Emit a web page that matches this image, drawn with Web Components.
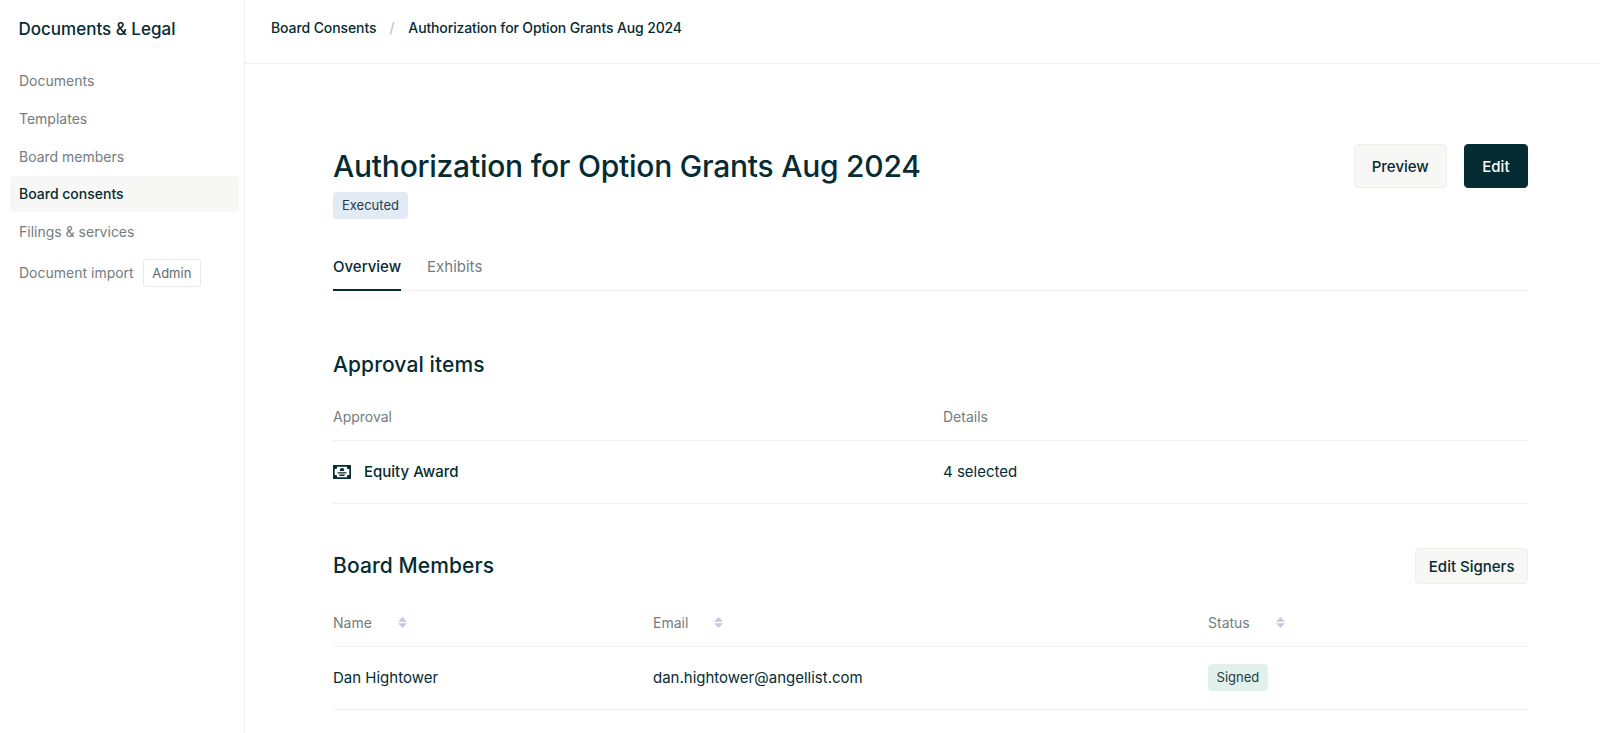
<!DOCTYPE html>
<html>
<head>
<meta charset="utf-8">
<title>Board Consents</title>
<style>
  html, body { margin: 0; height: 100%; background: #fff; overflow: hidden; }
  body { font-family: Inter, "Liberation Sans", sans-serif; color: #052b33; }
</style>
</head>
<body>
<app-shell>
  <side-nav slot="nav" heading="Documents &amp; Legal">
    <nav-item>Documents</nav-item>
    <nav-item>Templates</nav-item>
    <nav-item>Board members</nav-item>
    <nav-item active>Board consents</nav-item>
    <nav-item>Filings &amp; services</nav-item>
    <nav-item badge="Admin">Document import</nav-item>
  </side-nav>
  <bread-crumbs slot="top" parent="Board Consents" current="Authorization for Option Grants Aug 2024"></bread-crumbs>
  <consent-page></consent-page>
</app-shell>

<script>
class AppShell extends HTMLElement {
    constructor() {
        super();
        this.attachShadow({ mode: "open" }).innerHTML = `
        <style>
            :host { display: flex; height: 733px; overflow: hidden; }
            .main { flex: 1; min-width: 0; display: flex; flex-direction: column; }
        </style>
        <slot name="nav"></slot>
        <div class="main">
            <slot name="top"></slot>
            <slot></slot>
        </div>`;
    }
}

class SideNav extends HTMLElement {
    constructor() {
        super();
        this.attachShadow({ mode: "open" });
    }
    connectedCallback() {
        this.shadowRoot.innerHTML = `
        <style>
            :host { display: block; width: 245px; flex: none; box-sizing: border-box; border-right: 1px solid #f0f0ee; padding: 0 5px 0 10px; }
            h2 { margin: 0; padding: 19px 0 0 8.5px; height: 63px; box-sizing: border-box; font-size: 17px; line-height: 21px; font-weight: 500; color: #052b33; }
            .list { display: flex; flex-direction: column; gap: 2px; }
        </style>
        <h2>${this.getAttribute("heading")}</h2>
        <div class="list"><slot></slot></div>`;
    }
}

class NavItem extends HTMLElement {
    constructor() {
        super();
        this.attachShadow({ mode: "open" });
    }
    connectedCallback() {
        const badge = this.getAttribute("badge");
        this.shadowRoot.innerHTML = `
        <style>
            :host { display: flex; align-items: center; gap: 9px; min-height: 35.7px; padding: 0 9px; box-sizing: border-box; border-radius: 4px; font-size: 14px; color: #737c7e; }
            :host([active]) { background: #f7f7f5; color: #052b33; font-weight: 500; }
            :host([badge]) { min-height: 43px; }
            .badge { border: 1px solid #ebebe9; border-radius: 3px; padding: 0 8.5px; height: 26px; line-height: 26px; font-size: 13px; color: #5f6a6c; }
        </style>
        <span><slot></slot></span>
        ${badge ? `<span class="badge">${badge}</span>` : ""}`;
    }
}

class BreadCrumbs extends HTMLElement {
    constructor() {
        super();
        this.attachShadow({ mode: "open" });
    }
    connectedCallback() {
        this.shadowRoot.innerHTML = `
        <style>
            :host { display: flex; align-items: center; height: 64px; box-sizing: border-box; padding: 0 0 8px 26px; border-bottom: 1px solid #f0f0ee; font-size: 14px; font-weight: 500; letter-spacing: -0.1px; color: #052b33; }
            .sep { margin: 0 14px 0 13px; color: #b5babb; font-weight: 400; }
            .cur { letter-spacing: -0.13px; }
        </style>
        <span>${this.getAttribute("parent")}</span>
        <span class="sep">/</span>
        <span class="cur">${this.getAttribute("current")}</span>`;
    }
}

class StatusTag extends HTMLElement {
    constructor() {
        super();
        this.attachShadow({ mode: "open" }).innerHTML = `
        <style>
            :host { display: inline-block; height: 27px; line-height: 27px; padding: 0 var(--tag-pad, 9px); border-radius: 4px; font-size: 13px; background: var(--tag-bg, #e2ebf4); color: var(--tag-fg, #24404f); }
        </style>
        <slot></slot>`;
    }
}

class PlainButton extends HTMLElement {
    constructor() {
        super();
        this.attachShadow({ mode: "open" }).innerHTML = `
        <style>
            :host { display: inline-flex; align-items: center; justify-content: center; box-sizing: border-box; border: 1px solid #eeeeec; background: #f7f7f5; color: #052b33; border-radius: 4px; font-size: 15px; font-weight: 500; padding: 0 var(--btn-pad, 17px); height: var(--btn-h, 44px); }
            :host([primary]) { background: #052b33; border-color: #052b33; color: #fff; }
        </style>
        <slot></slot>`;
    }
}

class SortHead extends HTMLElement {
    constructor() {
        super();
        this.attachShadow({ mode: "open" }).innerHTML = `
        <style>
            :host { display: flex; align-items: center; font-size: 14px; color: #737c7e; }
            svg { display: block; margin-left: var(--sort-gap, 20px); }
        </style>
        <slot></slot>
        <svg width="9" height="11" viewBox="0 0 9 11"><path d="M4.5 0 L9 4.7 H0 Z M0 6.3 H9 L4.5 11 Z" fill="#c2cbdc"/></svg>`;
    }
}

class ConsentPage extends HTMLElement {
    constructor() {
        super();
        this.attachShadow({ mode: "open" }).innerHTML = `
        <style>
            :host { display: block; padding: 80px 72px 0 88px; }
            .head { display: flex; justify-content: space-between; align-items: flex-start; }
            h1 { margin: 0; font-size: 30px; line-height: 44px; font-weight: 500; letter-spacing: -0.24px; color: #052b33; }
            .head status-tag { margin-top: 4px; }
            .actions { display: flex; gap: 17px; }
            .tabs { display: flex; gap: 26px; margin-top: 26px; border-bottom: 1px solid #f0f0ee; font-size: 15px; color: #737c7e; }
            .tabs span { height: 46px; line-height: 44px; box-sizing: border-box; margin-bottom: -1px; }
            .tabs .on { color: #052b33; font-weight: 500; border-bottom: 2px solid #052b33; }
            h3 { margin: 0; font-size: 21px; line-height: 28px; font-weight: 500; letter-spacing: 0.1px; color: #052b33; }
            .approval { margin-top: 60px; }
            .row { display: grid; align-items: center; border-bottom: 1px solid #f0f0ee; font-size: 15px; }
            .cols2 { grid-template-columns: 610px 1fr; }
            .cols3 { grid-template-columns: 320px 555px 1fr; }
            .hd { font-size: 14px; color: #737c7e; height: 47px; }
            .bd { height: 61px; padding-bottom: 1px; }
            .award { display: flex; align-items: center; gap: 13px; font-weight: 500; }
            .bar { display: flex; justify-content: space-between; align-items: center; margin-top: 43px; height: 38px; }
            .bar plain-button { --btn-h: 36px; --btn-pad: 12.5px; }
            .signed { --tag-bg: #e2f0ec; --tag-fg: #1d3d40; --tag-pad: 8.6px; }
            .members { margin-top: 14px; }
        </style>
        <div class="head">
            <div>
                <h1>Authorization for Option Grants Aug 2024</h1>
                <status-tag>Executed</status-tag>
            </div>
            <div class="actions">
                <plain-button>Preview</plain-button>
                <plain-button primary style="--btn-pad:17.5px">Edit</plain-button>
            </div>
        </div>
        <div class="tabs"><span class="on">Overview</span><span>Exhibits</span></div>

        <section class="approval">
            <h3>Approval items</h3>
            <div class="row cols2 hd" style="margin-top:14px"><span>Approval</span><span>Details</span></div>
            <div class="row cols2 bd">
                <span class="award">
                    <svg width="18" height="14" viewBox="0 0 18 14">
                        <rect width="18" height="14" rx="0.8" fill="#052b33"/>
                        <path d="M4 1.7 H14 V3 A1 1 0 0 0 15 4 H16.3 V10 H15 A1 1 0 0 0 14 11 V12.3 H4 V11 A1 1 0 0 0 3 10 H1.7 V4 H3 A1 1 0 0 0 4 3 Z" fill="#fff"/>
                        <path d="M9 3 a2.2 2.2 0 0 1 2.2 2.2 V6 H6.8 V5.2 A2.2 2.2 0 0 1 9 3 Z M4.6 7.2 H13.4 V8.6 H4.6 Z M6.4 9.6 H11.6 V11 H6.4 Z" fill="#052b33"/>
                    </svg>
                    Equity Award
                </span>
                <span>4 selected</span>
            </div>
        </section>

        <div class="bar">
            <h3>Board Members</h3>
            <plain-button>Edit Signers</plain-button>
        </div>
        <section class="members">
            <div class="row cols3 hd">
                <sort-head style="--sort-gap:26px">Name</sort-head>
                <sort-head style="--sort-gap:26px">Email</sort-head>
                <sort-head style="--sort-gap:26px">Status</sort-head>
            </div>
            <div class="row cols3 bd">
                <span>Dan Hightower</span>
                <span>dan.hightower@angellist.com</span>
                <span><status-tag class="signed">Signed</status-tag></span>
            </div>
        </section>`;
    }
}

customElements.define("app-shell", AppShell);
customElements.define("side-nav", SideNav);
customElements.define("nav-item", NavItem);
customElements.define("bread-crumbs", BreadCrumbs);
customElements.define("status-tag", StatusTag);
customElements.define("plain-button", PlainButton);
customElements.define("sort-head", SortHead);
customElements.define("consent-page", ConsentPage);
</script>
</body>
</html>
